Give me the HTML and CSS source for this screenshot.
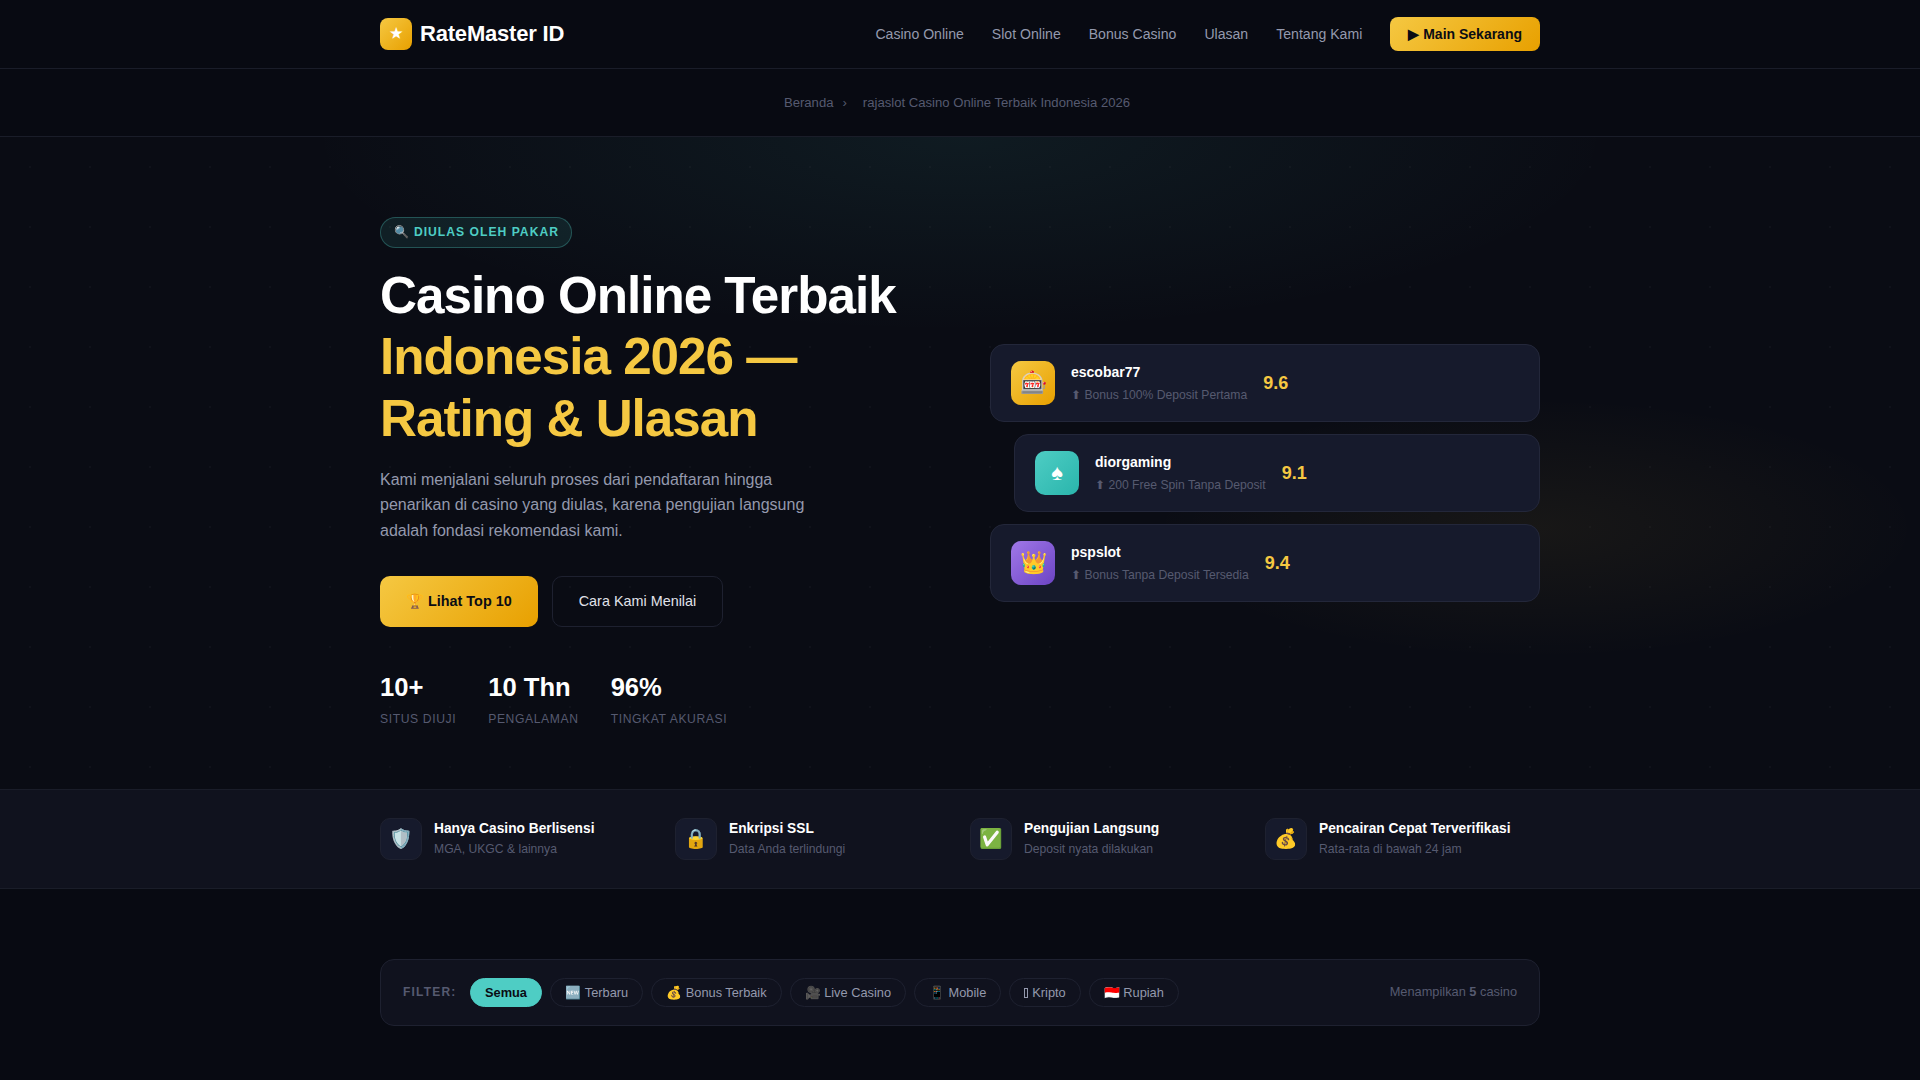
FILE: index.html
```html
<!DOCTYPE html>
<html lang="id">
<head>
    <meta charset="UTF-8">
    <meta name="viewport" content="width=device-width, initial-scale=1.0">
    <title>rajaslot Casino Online Terbaik Indonesia 2026</title>
    <link rel="stylesheet" href="styles.css">
</head>
<body>
    <header class="navbar">
        <div class="wrap navbar-inner">
            <a class="brand" href="#"><span class="brand-icon">★</span>RateMaster ID</a>
            <nav class="nav-links">
                <a href="#">Casino Online</a>
                <a href="#">Slot Online</a>
                <a href="#">Bonus Casino</a>
                <a href="#">Ulasan</a>
                <a href="#">Tentang Kami</a>
                <a href="#" class="nav-cta">▶ Main Sekarang</a>
            </nav>
        </div>
    </header>

    <div class="breadcrumb">
        <a href="#">Beranda</a><span class="crumb-sep">›</span><span>rajaslot Casino Online Terbaik Indonesia 2026</span>
    </div>

    <section class="hero">
        <div class="wrap hero-grid">
            <div class="hero-copy">
                <div class="hero-badge">🔍 DIULAS OLEH PAKAR</div>
                <h1>Casino Online Terbaik <span>Indonesia 2026 — Rating &amp; Ulasan</span></h1>
                <p class="hero-desc">Kami menjalani seluruh proses dari pendaftaran hingga penarikan di casino yang diulas, karena pengujian langsung adalah fondasi rekomendasi kami.</p>
                <div class="hero-actions">
                    <a href="#" class="btn btn-primary">🏆 Lihat Top 10</a>
                    <a href="#" class="btn btn-outline">Cara Kami Menilai</a>
                </div>
                <div class="hero-stats">
                    <div class="stat"><strong>10+</strong><span>Situs Diuji</span></div>
                    <div class="stat"><strong>10 Thn</strong><span>Pengalaman</span></div>
                    <div class="stat"><strong>96%</strong><span>Tingkat Akurasi</span></div>
                </div>
            </div>
            <div class="hero-cards">
                <div class="mini-card">
                    <div class="mini-icon gold">🎰</div>
                    <div class="mini-info">
                        <div class="mini-name">escobar77</div>
                        <div class="mini-bonus">⬆ Bonus 100% Deposit Pertama</div>
                    </div>
                    <div class="mini-score">9.6</div>
                </div>
                <div class="mini-card shifted">
                    <div class="mini-icon teal">♠</div>
                    <div class="mini-info">
                        <div class="mini-name">diorgaming</div>
                        <div class="mini-bonus">⬆ 200 Free Spin Tanpa Deposit</div>
                    </div>
                    <div class="mini-score">9.1</div>
                </div>
                <div class="mini-card">
                    <div class="mini-icon purple">👑</div>
                    <div class="mini-info">
                        <div class="mini-name">pspslot</div>
                        <div class="mini-bonus">⬆ Bonus Tanpa Deposit Tersedia</div>
                    </div>
                    <div class="mini-score">9.4</div>
                </div>
            </div>
        </div>
    </section>

    <section class="trust-bar">
        <div class="wrap trust-grid">
            <div class="trust-item">
                <div class="trust-icon">🛡️</div>
                <div><h3>Hanya Casino Berlisensi</h3><p>MGA, UKGC &amp; lainnya</p></div>
            </div>
            <div class="trust-item">
                <div class="trust-icon">🔒</div>
                <div><h3>Enkripsi SSL</h3><p>Data Anda terlindungi</p></div>
            </div>
            <div class="trust-item">
                <div class="trust-icon">✅</div>
                <div><h3>Pengujian Langsung</h3><p>Deposit nyata dilakukan</p></div>
            </div>
            <div class="trust-item">
                <div class="trust-icon">💰</div>
                <div><h3>Pencairan Cepat Terverifikasi</h3><p>Rata-rata di bawah 24 jam</p></div>
            </div>
        </div>
    </section>

    <section class="listing">
        <div class="wrap">
            <div class="filter-bar">
                <span class="filter-label">FILTER:</span>
                <button class="chip active">Semua</button>
                <button class="chip">🆕 Terbaru</button>
                <button class="chip">💰 Bonus Terbaik</button>
                <button class="chip">🎥 Live Casino</button>
                <button class="chip">📱 Mobile</button>
                <button class="chip"><span class="missing-glyph"></span>Kripto</button>
                <button class="chip">🇮🇩 Rupiah</button>
                <span class="filter-count">Menampilkan <b>5</b> casino</span>
            </div>
        </div>
    </section>
</body>
</html>
```

FILE: styles.css
```css
* {
    box-sizing: border-box;
}

html, body {
    height: 1080px;
    overflow: hidden;
}

body {
    margin: 0;
    font-family: 'Liberation Sans', Arial, sans-serif;
    line-height: 1.6;
    background-color: #080a12;
    color: #ffffff;
}

a {
    color: inherit;
    text-decoration: none;
}

.wrap {
    width: 1160px;
    margin: 0 auto;
}

/* navbar */
.navbar {
    height: 69px;
    border-bottom: 1px solid #1a1d29;
}

.navbar-inner {
    height: 68px;
    display: flex;
    align-items: center;
    justify-content: space-between;
}

.brand {
    display: flex;
    align-items: center;
    gap: 8px;
    font-size: 22px;
    font-weight: 700;
    letter-spacing: -0.2px;
}

.brand-icon {
    width: 32px;
    height: 32px;
    border-radius: 8px;
    background: linear-gradient(135deg, #f5c842, #e8a000);
    display: flex;
    align-items: center;
    justify-content: center;
    font-size: 14.4px;
}

.nav-links {
    display: flex;
    align-items: center;
    gap: 28px;
    font-size: 14.08px;
    color: #9499ad;
}

.nav-cta {
    padding: 6px 18px;
    border-radius: 8px;
    background: linear-gradient(135deg, #f5c842, #e8a000);
    color: #0a0c14;
    font-size: 14px;
    font-weight: 700;
}

/* breadcrumb */
.breadcrumb {
    height: 68px;
    padding-right: 6px;
    display: flex;
    align-items: center;
    justify-content: center;
    border-bottom: 1px solid #1a1d29;
    font-size: 13.12px;
    color: #565a70;
}

.crumb-sep {
    margin: 0 16px 0 9px;
}

/* hero */
.hero {
    padding: 80px 0 60px;
    background-color: #0a0c14;
    background-image:
        radial-gradient(circle, rgba(255, 255, 255, 0.025) 1px, transparent 1px),
        radial-gradient(ellipse 34% 30% at 50% 0%, rgba(78, 205, 196, 0.08), transparent 100%),
        radial-gradient(ellipse 20% 20% at 80% 60%, rgba(245, 200, 66, 0.06), transparent 100%);
    background-size: 60px 60px, auto, auto;
}

.hero-grid {
    display: grid;
    grid-template-columns: 1fr 1fr;
    gap: 60px;
    align-items: center;
}

.hero-badge {
    width: fit-content;
    padding: 5px 12.5px;
    border: 1px solid rgba(78, 205, 196, 0.3);
    border-radius: 100px;
    background: rgba(78, 205, 196, 0.1);
    color: #4ecdc4;
    font-size: 12.16px;
    font-weight: 700;
    letter-spacing: 1px;
    margin-bottom: 16.5px;
}

h1 {
    margin: 0 0 17.5px;
    font-size: 51.2px;
    line-height: 1.2;
    letter-spacing: -1px;
    font-weight: 700;
}

h1 span {
    color: #f5c842;
}

.hero-desc {
    margin: 0 0 32px;
    max-width: 440px;
    font-size: 16px;
    color: #9499ad;
}

.hero-actions {
    display: flex;
    gap: 14px;
    margin-bottom: 40px;
}

.btn {
    padding: 14px 26px;
    border-radius: 10px;
    font-size: 14.4px;
}

.btn-primary {
    background: linear-gradient(135deg, #f5c842, #e8a000);
    color: #0a0c14;
    font-weight: 700;
}

.btn-outline {
    padding: 13px 26px;
    border: 1px solid #1e2130;
    color: #e0e2ea;
}

.hero-stats {
    display: flex;
    gap: 32px;
}

.stat strong {
    display: block;
    font-size: 25.6px;
    font-weight: 700;
    margin-bottom: 2px;
}

.stat span {
    display: block;
    font-size: 12.16px;
    letter-spacing: 0.6px;
    text-transform: uppercase;
    color: #565a70;
}

.hero-cards {
    display: flex;
    flex-direction: column;
    gap: 12px;
}

.mini-card {
    display: flex;
    align-items: center;
    gap: 16px;
    padding: 16px 20px;
    height: 78px;
    background: #161a2c;
    border: 1px solid #23273a;
    border-radius: 14px;
}

.mini-card.shifted {
    margin-left: 24px;
}

.mini-icon {
    width: 44px;
    height: 44px;
    flex-shrink: 0;
    border-radius: 10px;
    display: flex;
    align-items: center;
    justify-content: center;
    font-size: 22px;
}

.mini-icon.gold {
    background: linear-gradient(135deg, #f5c842, #e8a000);
}

.mini-icon.teal {
    background: linear-gradient(135deg, #4ecdc4, #2ab5ac);
}

.mini-icon.purple {
    background: linear-gradient(135deg, #a078e8, #6c44c4);
}

.mini-name {
    font-size: 14px;
    font-weight: 700;
    margin-bottom: 3px;
}

.mini-bonus {
    font-size: 12.16px;
    color: #565a70;
}

.mini-score {
    font-size: 18px;
    font-weight: 700;
    color: #f5c842;
}

/* trust bar */
.trust-bar {
    padding: 28px 0;
    background: #10121e;
    border-top: 1px solid #1a1d29;
    border-bottom: 1px solid #1a1d29;
}

.trust-grid {
    display: grid;
    grid-template-columns: repeat(4, 1fr);
    gap: 20px;
}

.trust-item {
    display: flex;
    align-items: center;
    gap: 12px;
}

.trust-icon {
    width: 42px;
    height: 42px;
    flex-shrink: 0;
    border: 1px solid #1e2130;
    border-radius: 10px;
    background: #161a2c;
    display: flex;
    align-items: center;
    justify-content: center;
    font-size: 19px;
}

.trust-item h3 {
    margin: 0;
    font-size: 13.76px;
    font-weight: 700;
}

.trust-item p {
    margin: 0;
    font-size: 12.16px;
    color: #565a70;
}

/* filter */
.listing {
    padding-top: 70px;
}

.filter-bar {
    display: flex;
    align-items: center;
    gap: 8px;
    padding: 18px 22px;
    background: #10121e;
    border: 1px solid #1e2130;
    border-radius: 14px;
}

.filter-label {
    margin-right: 5px;
    font-size: 12px;
    font-weight: 700;
    letter-spacing: 1.2px;
    color: #565a70;
}

.chip {
    height: 29px;
    padding: 0 14px;
    border: 1px solid #1e2130;
    border-radius: 100px;
    background: transparent;
    color: #9499ad;
    font-family: inherit;
    font-size: 12.8px;
}

.chip.active {
    padding: 0 14.5px;
    background: #4ecdc4;
    border-color: #4ecdc4;
    color: #0a0c14;
    font-weight: 700;
}

/* the reference shows an empty box where the coin glyph was missing */
.missing-glyph {
    display: inline-block;
    width: 4px;
    height: 10px;
    margin-right: 4px;
    border: 1px solid #9499ad;
    vertical-align: -1px;
}

.filter-count {
    margin-left: auto;
    font-size: 12.8px;
    color: #565a70;
}
```
